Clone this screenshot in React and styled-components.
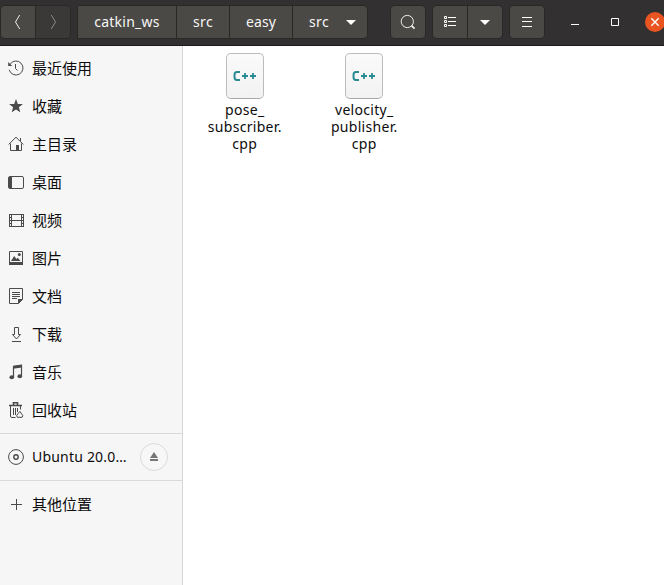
import React from "react";
import styled, { createGlobalStyle } from "styled-components";

const GlobalStyle = createGlobalStyle`
  * { box-sizing: border-box; }
  body { margin: 0; overflow: hidden; }
`;

const Window = styled.div`
  width: 664px;
  height: 585px;
  overflow: hidden;
  display: flex;
  flex-direction: column;
  background: #fff;
  color: #0c0c0c;
  font: 14px/17px "Noto Sans", "Noto Sans CJK SC", sans-serif;
`;

const HeaderBar = styled.header`
  height: 46px;
  flex: none;
  display: flex;
  align-items: flex-start;
  padding: 5px 0 0;
  background: #333031;
  border-bottom: 1px solid #1d1a1b;
`;

const Group = styled.div`
  display: flex;
  flex: none;
  height: 34px;
  margin-left: ${(p) => p.$gap}px;
  border: 1px solid #2a2727;
  border-radius: ${(p) => p.$radius || "5px"};
  overflow: hidden;
`;

const Button = styled.button`
  width: ${(p) => p.$width}px;
  height: 32px;
  flex: none;
  display: flex;
  align-items: center;
  justify-content: center;
  gap: 16px;
  padding: 0 0 0 ${(p) => p.$indent || 0}px;
  border: 0;
  background: ${(p) => (p.$disabled ? "#3b3938" : "#4b4946")};
  color: #f6f6f5;
  font: inherit;
  & + & { border-left: 1px solid #2a2727; }
  svg { flex: none; }
`;

const Fitted = styled.span`
  letter-spacing: ${(p) => p.$track || 0}px;
  padding-bottom: ${(p) => p.$lift || 0}px;
  white-space: nowrap;
`;

const WindowControls = styled.div`
  display: flex;
  align-items: center;
  height: 34px;
  margin-left: 20px;
  gap: 20px;
  svg { flex: none; }
`;

const Body = styled.div`
  flex: 1;
  display: flex;
  min-height: 0;
`;

const Sidebar = styled.nav`
  width: 183px;
  flex: none;
  padding-top: 3px;
  background: #f6f6f6;
  border-right: 1px solid #d8d8d8;
`;

const Place = styled.div`
  height: 38px;
  display: flex;
  align-items: center;
  padding: 0 14px 0 8px;
  font-size: ${(p) => (p.$latin ? 14 : 15)}px;
  line-height: 20px;
  font-family: ${(p) => (p.$latin ? '"Noto Sans"' : '"Noto Sans CJK SC"')}, sans-serif;
  svg { flex: none; margin-right: 8px; }
`;

const Section = styled.div`
  height: 47px;
  margin-top: ${(p) => p.$top || 0}px;
  padding-top: 4px;
  border-top: 1px solid #dadada;
`;

const Eject = styled.button`
  width: 28px;
  height: 28px;
  margin-left: auto;
  padding: 0;
  border: 1px solid #dadada;
  border-radius: 50%;
  background: #f7f7f7;
  display: flex;
  align-items: center;
  justify-content: center;
  svg { margin: 0; }
`;

const Files = styled.main`
  flex: 1;
  display: flex;
  align-items: flex-start;
  padding: 7px 0 0 2px;
`;

const File = styled.div`
  width: 119.5px;
  display: flex;
  flex-direction: column;
  align-items: center;
`;

const Page = styled.div`
  width: 38px;
  height: 46px;
  margin-bottom: 2px;
  border: 1px solid #bcbcbc;
  border-bottom-color: #aaa;
  border-radius: 5px;
  background: linear-gradient(#fafafa, #f2f2f2);
  display: flex;
  align-items: center;
  justify-content: center;
`;

const Icon = ({ children, size = 16, color = "#4a4a4a", ...rest }) => (
  <svg width={size} height={size} viewBox={`0 0 ${size} ${size}`} fill="none" stroke={color} {...rest}>
    {children}
  </svg>
);

const Caret = () => (
  <Icon color="none" size={12}><path d="M1 4h10L6 9z" fill="#fff" /></Icon>
);

const icons = {
  recent: (
    <Icon><path d="M2.1 4.2A7 7 0 1 1 1.2 9.8M7.5 4v4.5l2 2" /><path d="M.2 2v4h4z" fill="#4a4a4a" stroke="none" /></Icon>
  ),
  star: (
    <Icon><path d="M8 1l1.8 4.9 5.1.1-4 3.3 1.4 5L8 11.5l-4.3 2.8 1.4-5L1.1 6l5.1-.1z" fill="#4a4a4a" stroke="none" /></Icon>
  ),
  home: (
    <Icon><path d="M.6 8.5L8 1.2l7.4 7.3M2.5 7.5v7h11v-7M12.5 2v3" /><path d="M8 9h3v6H8z" fill="#4a4a4a" stroke="none" /></Icon>
  ),
  desktop: (
    <Icon><rect x=".5" y="2.5" width="15" height="12" rx="1.5" /><path d="M1 3h3v11H1z" fill="#4a4a4a" stroke="none" /></Icon>
  ),
  video: (
    <Icon><path d="M1.5 2v13M3.5 2v13M13.5 2v13M15.5 2v13M3 2.5h11M3 8.5h11M3 14.5h11" /><path d="M2.5 2v13M14.5 2v13" strokeDasharray="1 2" /></Icon>
  ),
  image: (
    <Icon><path d="M1.5 1.5h13v13h-13z" /><path d="M1 12h14v3H1zM3 11l3.2-5 2.3 3 1.3-1.2L12.5 11z" fill="#4a4a4a" stroke="none" /><circle cx="11.3" cy="4.5" r="1.5" fill="#4a4a4a" stroke="none" /></Icon>
  ),
  document: (
    <Icon><path d="M1.5 .5h13v11l-4 4h-9zM4 4.5h8M4 6.5h8M4 8.5h8M4 10.5h5" /><path d="M10 11h5l-5 5z" fill="#4a4a4a" stroke="none" /></Icon>
  ),
  download: (
    <Icon><path d="M6.5 1.5h4v7h2L8.5 13l-4-4.5h2zM4 15.5h9" /></Icon>
  ),
  music: (
    <Icon><path d="M5.5 13V2.8L13.5 1.5V12" strokeWidth="1.2" /><path d="M5 1.8L14 .6v3L5 4.8z" fill="#4a4a4a" stroke="none" /><ellipse cx="3.8" cy="13.3" rx="2.3" ry="2" fill="#4a4a4a" stroke="none" /><ellipse cx="11.8" cy="12.3" rx="2.3" ry="2" fill="#4a4a4a" stroke="none" /></Icon>
  ),
  trash: (
    <Icon><path d="M1 3.5h13M5.5 3V.8h4V3" strokeWidth="1.6" /><path d="M2.5 4v10q0 1.5 1.5 1.5h3.5M12.5 4v3.5M5.5 6v7M7.5 6v7M9.5 6v4M9.7 12l2.2-2.6 1.8 2.6M9.7 12q-1.8 1.5-.4 3.3h4.8q1.7-1.6-.4-3.3" /></Icon>
  ),
  disc: (
    <Icon><circle cx="8" cy="8" r="7.4" /><circle cx="8" cy="8" r="2.2" strokeWidth="1.4" /></Icon>
  ),
  plus: (
    <Icon><path d="M8.5 3v11M3 8.5h11" /></Icon>
  ),
};

const places = [
  ["recent", "最近使用"],
  ["star", "收藏"],
  ["home", "主目录"],
  ["desktop", "桌面"],
  ["video", "视频"],
  ["image", "图片"],
  ["document", "文档"],
  ["download", "下载"],
  ["music", "音乐"],
  ["trash", "回收站"],
];

const files = [
  ["pose_", "subscriber.", "cpp"],
  ["velocity_", "publisher.", "cpp"],
];

const CppMark = () => (
  <Icon size={24} color="#298b91">
    <path d="M7 8H4Q1.5 8 1.5 11v2q0 3 2.5 3h3" strokeWidth="2" />
    <path d="M9 12h6M12 9v6M17 12h6M20 9v6" strokeWidth="1.8" />
  </Icon>
);

export default function App() {
  return (
    <Window>
      <GlobalStyle />
      <HeaderBar>
        <Group $gap={0}>
          <Button $width={34}><Icon color="#eee"><path d="M9.7 1L5.5 8l4.2 7" /></Icon></Button>
          <Button $width={35} $disabled><Icon color="#8c8a89"><path d="M6.3 1l4.2 7-4.2 7" /></Icon></Button>
        </Group>
        <Group $gap={6} $radius="0 5px 5px 0">
          <Button $width={98}><Fitted $track={0.25} $lift={2}>catkin_ws</Fitted></Button>
          <Button $width={53}><Fitted $track={0.3} $lift={2}>src</Fitted></Button>
          <Button $width={63}><Fitted $track={0.1} $lift={2}>easy</Fitted></Button>
          <Button $width={75} $indent={6}><Fitted $track={0.3} $lift={2}>src</Fitted><Caret /></Button>
        </Group>
        <Group $gap={22}>
          <Button $width={34}><Icon color="#eee"><circle cx="7.3" cy="7.5" r="6.1" /><path d="M11.5 11.7l3 3" strokeWidth="1.8" /></Icon></Button>
        </Group>
        <Group $gap={6}>
          <Button $width={34}>
            <Icon color="#fff"><path d="M2.5 2.5h2v2h-2zM2.5 6.5h2v2h-2zM2.5 10.5h2v2h-2zM6 3.5h8M6 7.5h8M6 11.5h8" /></Icon>
          </Button>
          <Button $width={35}><Caret /></Button>
        </Group>
        <Group $gap={6}>
          <Button $width={34}><Icon color="#fff"><path d="M3 3.5h10M3 7.5h10M3 12.5h10" /></Icon></Button>
        </Group>
        <WindowControls>
          <Icon size={20} color="#fff"><path d="M6 12.5h8" /></Icon>
          <Icon size={20} color="#fff"><path d="M6.5 6.5h7v7h-7z" /></Icon>
          <Icon size={20} color="#fff"><circle cx="10" cy="10" r="10" fill="#e95420" stroke="none" /><path d="M6.3 6.3l7.4 7.4M13.7 6.3l-7.4 7.4" strokeWidth="1.4" /></Icon>
        </WindowControls>
      </HeaderBar>
      <Body>
        <Sidebar>
          {places.map(([icon, label]) => (
            <Place key={icon}>{icons[icon]}{label}</Place>
          ))}
          <Section $top={4}>
            <Place $latin>
              {icons.disc}<Fitted $track={0.2}>Ubuntu 20.0…</Fitted>
              <Eject><Icon size={10} color="none"><path d="M5 0l4 6H1zM1 7h8v2H1z" fill="#777" /></Icon></Eject>
            </Place>
          </Section>
          <Section>
            <Place>{icons.plus}其他位置</Place>
          </Section>
        </Sidebar>
        <Files>
          {files.map((lines) => (
            <File key={lines[0]}>
              <Page><CppMark /></Page>
              {lines.map((text) => <Fitted key={text} $track={0.3}>{text}</Fitted>)}
            </File>
          ))}
        </Files>
      </Body>
    </Window>
  );
}
